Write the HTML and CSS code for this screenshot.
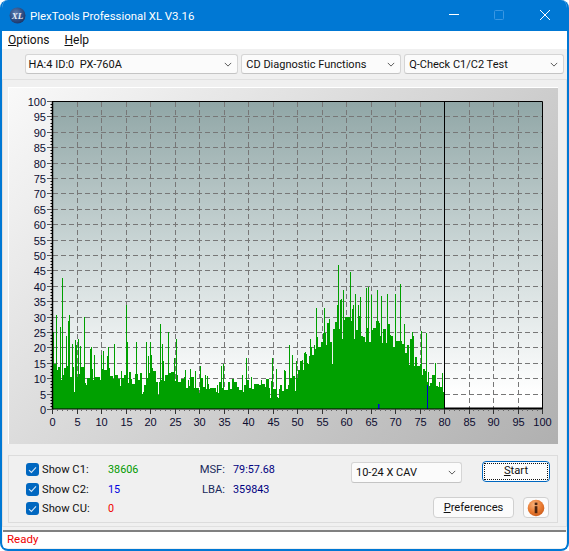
FILE: index.html
```html
<!DOCTYPE html>
<html lang="en">
<head>
<meta charset="utf-8">
<title>PlexTools Professional XL V3.16</title>
<link rel="stylesheet" href="styles.css">
</head>
<body>
<div class="window">
  <header class="titlebar">
    <svg class="logo" viewBox="0 0 17 17" width="17" height="17" aria-hidden="true">
      <defs>
        <radialGradient id="logoFill" cx="0.4" cy="0.35" r="0.7">
          <stop offset="0" stop-color="#5f7fb0"/>
          <stop offset="0.6" stop-color="#2f4f86"/>
          <stop offset="1" stop-color="#1a3566"/>
        </radialGradient>
      </defs>
      <circle cx="8.5" cy="8.5" r="8" fill="url(#logoFill)"/>
      <text x="8.5" y="11.5" class="logo-text" text-anchor="middle">XL</text>
    </svg>
    <span class="title">PlexTools Professional XL V3.16</span>
    <div class="controls">
      <svg class="ctl ctl-min" width="12" height="12" viewBox="0 0 12 12" aria-hidden="true"><path d="M1 5.5H11" stroke="#fff" fill="none"/></svg>
      <svg class="ctl ctl-max" width="12" height="12" viewBox="0 0 12 12" aria-hidden="true"><rect x="1.5" y="1.5" width="9" height="9" rx="1" stroke="#3a97e2" fill="none"/></svg>
      <svg class="ctl ctl-close" width="12" height="12" viewBox="0 0 12 12" aria-hidden="true"><path d="M1 1L11 11M11 1L1 11" stroke="#fff" fill="none"/></svg>
    </div>
  </header>

  <nav class="menubar">
    <span class="menu-item"><u>O</u>ptions</span>
    <span class="menu-item"><u>H</u>elp</span>
  </nav>

  <div class="toolbar">
    <div class="combo combo-drive"><span>HA:4 ID:0&nbsp; PX-760A</span><svg class="chev" width="8" height="5" viewBox="0 0 10 6"><path d="M1 1L5 5L9 1" fill="none" stroke="#555" stroke-width="1.2"/></svg></div>
    <div class="combo combo-func"><span>CD Diagnostic Functions</span><svg class="chev" width="8" height="5" viewBox="0 0 10 6"><path d="M1 1L5 5L9 1" fill="none" stroke="#555" stroke-width="1.2"/></svg></div>
    <div class="combo combo-test"><span>Q-Check C1/C2 Test</span><svg class="chev" width="8" height="5" viewBox="0 0 10 6"><path d="M1 1L5 5L9 1" fill="none" stroke="#555" stroke-width="1.2"/></svg></div>
  </div>

  <main class="frame">
    <section class="chart-panel">
      <svg id="chart" class="chart" width="549" height="356" viewBox="9 88 549 356"></svg>
    </section>

    <section class="bottom">
      <div class="checks">
        <label class="check"><span class="box"><svg width="9" height="8" viewBox="0 0 9 8"><path d="M1 4.2L3.4 6.4L8 1.4" fill="none" stroke="#d5e6f7" stroke-width="1.1"/></svg></span>Show C1:</label>
        <label class="check"><span class="box"><svg width="9" height="8" viewBox="0 0 9 8"><path d="M1 4.2L3.4 6.4L8 1.4" fill="none" stroke="#d5e6f7" stroke-width="1.1"/></svg></span>Show C2:</label>
        <label class="check"><span class="box"><svg width="9" height="8" viewBox="0 0 9 8"><path d="M1 4.2L3.4 6.4L8 1.4" fill="none" stroke="#d5e6f7" stroke-width="1.1"/></svg></span>Show CU:</label>
      </div>
      <div class="counts">
        <span class="c1">38606</span>
        <span class="c2">15</span>
        <span class="cu">0</span>
      </div>
      <dl class="position">
        <dt>MSF:</dt><dd>79:57.68</dd>
        <dt>LBA:</dt><dd>359843</dd>
      </dl>
      <div class="actions">
        <div class="actions-top">
          <div class="combo combo-speed"><span>10-24 X CAV</span><svg class="chev" width="8" height="5" viewBox="0 0 10 6"><path d="M1 1L5 5L9 1" fill="none" stroke="#555" stroke-width="1.2"/></svg></div>
          <button class="btn btn-start"><span class="focus"><u>S</u>tart</span></button>
        </div>
        <div class="actions-bottom">
          <button class="btn btn-prefs"><u>P</u>references</button>
          <button class="btn btn-info" aria-label="Info">
            <svg width="18" height="18" viewBox="0 0 18 18" aria-hidden="true">
              <defs>
                <radialGradient id="infoFill" cx="0.4" cy="0.3" r="0.75">
                  <stop offset="0" stop-color="#f9b27c"/>
                  <stop offset="0.6" stop-color="#e8792f"/>
                  <stop offset="1" stop-color="#c9591a"/>
                </radialGradient>
              </defs>
              <circle cx="9" cy="9" r="8.3" fill="url(#infoFill)"/>
              <rect x="7.7" y="3.6" width="2.7" height="2.5" fill="#4a2410"/>
              <rect x="7.7" y="7.2" width="2.7" height="7" fill="#4a2410"/>
            </svg>
          </button>
        </div>
      </div>
    </section>
  </main>

  <footer class="statusbar">Ready</footer>
</div>
<script src="chart.js"></script>
</body>
</html>
```

FILE: styles.css
```css
* { box-sizing: border-box; }
html, body { margin: 0; padding: 0; background: #fff; }
body { width: 569px; height: 551px; overflow: hidden; font-family: Roboto, "Liberation Sans", sans-serif; font-size: 11.2px; color: #111; }

.window {
  width: 569px; height: 551px;
  display: flex; flex-direction: column;
  background: #f0f0f0;
  border: 2px solid #0078d4; border-top: 0;
  border-radius: 8px;
  overflow: hidden;
}

.titlebar { height: 31px; flex: none; margin: 0 -2px; padding-left: 9px; background: #0078d4; display: flex; align-items: center; color: #fff; }
.logo { flex: none; margin-top: -1px; }
.logo-text { font: italic bold 9px "Liberation Serif", serif; fill: #e8eef8; }
.title { margin-left: 4px; font-size: 11.4px; white-space: nowrap; }
.controls { margin-left: auto; display: flex; }
.ctl { display: block; margin-top: -1px; }
.ctl-min { margin-right: 33px; }
.ctl-max { margin-right: 34px; }
.ctl-close { margin-right: 18px; }

.menubar { height: 18px; flex: none; background: #fff; display: flex; gap: 15px; padding-left: 6px; align-items: center; font-size: 12px; }

.toolbar { height: 30px; flex: none; padding: 5px 3px 0 22.5px; display: flex; gap: 3px; }

.combo { height: 20px; background: #fbfbfb; border: 1px solid #d5d5d5; border-bottom-color: #c4c4c4; border-radius: 3px; display: flex; align-items: center; justify-content: space-between; padding: 0 5px 0 4px; font-size: 11px; white-space: nowrap; }
.combo-drive { width: 214px; padding-left: 3px; }
.combo-func { width: 160px; }
.combo-test { width: 160px; }
.combo-speed { width: 111px; height: 21px; flex: none; margin-top: 2px; }
.chev { flex: none; }

.frame { flex: 1; margin: 0 0 3px 0; border: 1px solid #e0e0e0; padding: 7px 7px 3px 5px; display: flex; flex-direction: column; }

.chart-panel { width: 550px; height: 357px; flex: none; background: linear-gradient(135deg, #f9f9f9, #b0b0b0); border-top: 1px solid #fff; border-left: 1px solid #fff; }
.chart { display: block; }
.chart text { font: 11px "Liberation Sans", sans-serif; fill: #0c0c30; }

.bottom { width: 550px; height: 68px; flex: none; margin-top: 11px; border: 1px solid #dcdcdc; display: flex; padding: 4px 0 0 17px; }

.checks { width: 82px; flex: none; display: flex; flex-direction: column; }
.check { height: 19.5px; display: flex; align-items: center; gap: 3px; white-space: nowrap; }
.box { width: 13px; height: 13px; background: #0067c0; border-radius: 3px; display: flex; align-items: center; justify-content: center; flex: none; }

.counts { width: 79px; flex: none; display: flex; flex-direction: column; font-size: 10.8px; }
.counts span { height: 19.5px; line-height: 19px; }
.c1 { color: #009a00; }
.c2 { color: #0000e0; }
.cu { color: #f00000; }

.position { margin: 0; display: grid; grid-template-columns: 38px 90px; grid-auto-rows: 19.5px; align-content: start; flex: none; width: 134px; line-height: 19px; }
.position dt { text-align: right; color: #1a2a5c; }
.position dd { margin: 0 0 0 8px; color: #000080; font-size: 10.8px; }

.actions { flex: 1; display: flex; flex-direction: column; }
.actions-top { display: flex; align-items: flex-start; gap: 20px; margin-left: 30px; }
.actions-bottom { display: flex; gap: 9px; margin-top: 14px; margin-left: 112px; }

.btn { font: inherit; color: #111; background: #fbfbfb; border: 1px solid #d0d0d0; border-radius: 4px; padding: 0; height: 21px; }
.btn-start { width: 68px; border: 1.5px solid #0067c0; margin-top: 1px; padding: 1px; background: #fdfdfd; flex: none; }
.focus { display: block; height: 100%; border: 1px dotted #111; line-height: 14px; }
.btn-prefs { width: 81px; }
.btn-info { width: 26px; display: flex; align-items: center; justify-content: center; }

.statusbar { height: 18px; flex: none; margin: 0 1px 3px 1px; background: #fff; border-top: 2px solid #808080; color: #f00000; padding-left: 4px; line-height: 15px; font-size: 11.5px; }
```

FILE: chart.js
```js
(function () {
  var svg = document.getElementById('chart');
  var NS = 'http://www.w3.org/2000/svg';
  var X0 = 52, XS = 4.9, Y0 = 409, YS = 3.08;
  function el(name, attrs, text) {
    var e = document.createElementNS(NS, name);
    for (var k in attrs) e.setAttribute(k, attrs[k]);
    if (text !== undefined) e.textContent = text;
    svg.appendChild(e);
    return e;
  }
  var defs = document.createElementNS(NS, 'defs');
  defs.innerHTML = '<linearGradient id="plotFill" x1="0" y1="0" x2="0" y2="1">' +
    '<stop offset="0" stop-color="#90a6a6"/><stop offset="0.5" stop-color="#ced9d9"/>' +
    '<stop offset="0.95" stop-color="#ffffff"/></linearGradient>';
  svg.appendChild(defs);
  el('rect', { x: X0, y: 101, width: 490, height: 308, fill: 'url(#plotFill)' });

  // Grid
  for (var v = 5; v < 100; v += 5) {
    var x = Math.round(X0 + v * XS) + 0.5;
    var y = Math.round(Y0 - v * YS) + 0.5;
    el('path', { d: 'M' + x + ' 102V408', stroke: '#777', 'stroke-dasharray': '5 3', fill: 'none' });
    el('path', { d: 'M53 ' + y + 'H542', stroke: '#777', 'stroke-dasharray': '5 3', fill: 'none' });
  }

  // Envelope of the C1 trace, [x, level]
  var env = [[52,13],[75,13],[110,11],[170,10],[190,8.5],[285,8],[292,10],[300,13],[310,18],[320,23],[330,26],[340,27.5],[350,27],[380,26],[390,25],[400,23],[410,19],[420,13],[430,10],[444,6]];
  function level(x) {
    for (var i = 1; i < env.length; i++) {
      if (x <= env[i][0]) {
        var a = env[i - 1], b = env[i];
        return a[1] + (b[1] - a[1]) * (x - a[0]) / (b[0] - a[0]);
      }
    }
    return 6;
  }
  var seed = 76123;
  function rnd() { seed = (seed * 16807) % 2147483647; return seed / 2147483647; }
  var heights = {};
  var px = 52;
  while (px <= 444) {
    var base = level(px);
    var dense = px > 300 && px < 405;
    var r = rnd();
    var run = 1 + Math.floor(rnd() * 2.4);
    var h = base * (dense ? 0.82 + rnd() * 0.3 : 0.72 + rnd() * 0.5);
    if (r < 0.08) { h = base * (0.4 + rnd() * 0.3); run = 1; }
    else if (r > 0.86) { h = base * (dense ? 1.12 + rnd() * 0.26 : 1.25 + rnd() * 0.5); run = 1; }
    for (var i = 0; i < run && px <= 444; i++) heights[px++] = h;
  }
  var spikes = [[53,25],[56,30.5],[60,26.7],[62,42.5],[66,23.7],[68,28.5],[69,30.5],[72,21],[78,22.8],[84,29.8],[91,20],[94,17.7],[101,17.7],[103,19],[108,20],[114,21],[126,33.8],[127,21.7],[136,21.7],[146,21.7],[150,21.7],[160,27.6],[162,21],[168,25],[176,22.7],[200,13.9],[223,14.7],[246,16.5],[272,16.5],[289,20.8],[292,17.7],[316,32.7],[324,32.7],[337,33.8],[338,46.8],[343,38.6],[350,44.6],[353,33.8],[355,37.5],[358,33.8],[366,39.2],[368,39.7],[371,37],[377,38.6],[381,36.6],[387,37.5],[395,37.5],[400,40.6],[404,27.6],[412,25],[421,25.5],[426,24.8],[435,14.9],[442,11.6]];
  spikes.forEach(function (s) { heights[s[0]] = s[1]; });
  var d = '';
  for (var c = 52; c <= 444; c++) {
    d += 'M' + (c + 0.5) + ' 409V' + (409 - heights[c] * YS).toFixed(1);
  }
  el('path', { d: d, stroke: '#00a000', 'stroke-width': 1, fill: 'none', 'shape-rendering': 'crispEdges' });
  // C2 marks
  el('rect', { x: 378, y: 404, width: 1.5, height: 5, fill: '#0000e6' });
  el('rect', { x: 427, y: 385, width: 1, height: 24, fill: '#0000c8' });

  // Frame
  el('path', { d: 'M52 101.5H542.5V409', stroke: '#000', fill: 'none' });
  el('path', { d: 'M444.5 101V409', stroke: '#000', fill: 'none' });
  el('path', { d: 'M52 409H444', stroke: '#000', 'stroke-width': 1, fill: 'none' });
  el('path', { d: 'M444 408.5H543', stroke: '#000', 'stroke-width': 2, fill: 'none' });
  el('path', { d: 'M52.5 101V410', stroke: '#000', 'stroke-width': 1.5, fill: 'none' });

  // Ticks and labels
  for (var u = 0; u <= 100; u++) {
    var ty = Math.round(Y0 - u * YS) + 0.5;
    var tx = Math.round(X0 + u * XS) + 0.5;
    var major = u % 5 === 0;
    el('path', { d: 'M' + (major ? 47 : 50.5) + ' ' + ty + 'H52', stroke: major ? '#555' : '#000', fill: 'none' });
    el('path', { d: 'M' + tx + ' 409V' + (major ? 414 : 411), stroke: major ? '#333' : '#666', fill: 'none' });
    if (major) {
      el('text', { x: 46, y: ty + 4, 'text-anchor': 'end' }, String(u));
      el('text', { x: tx, y: 426, 'text-anchor': 'middle' }, String(u));
    }
  }
})();
```
